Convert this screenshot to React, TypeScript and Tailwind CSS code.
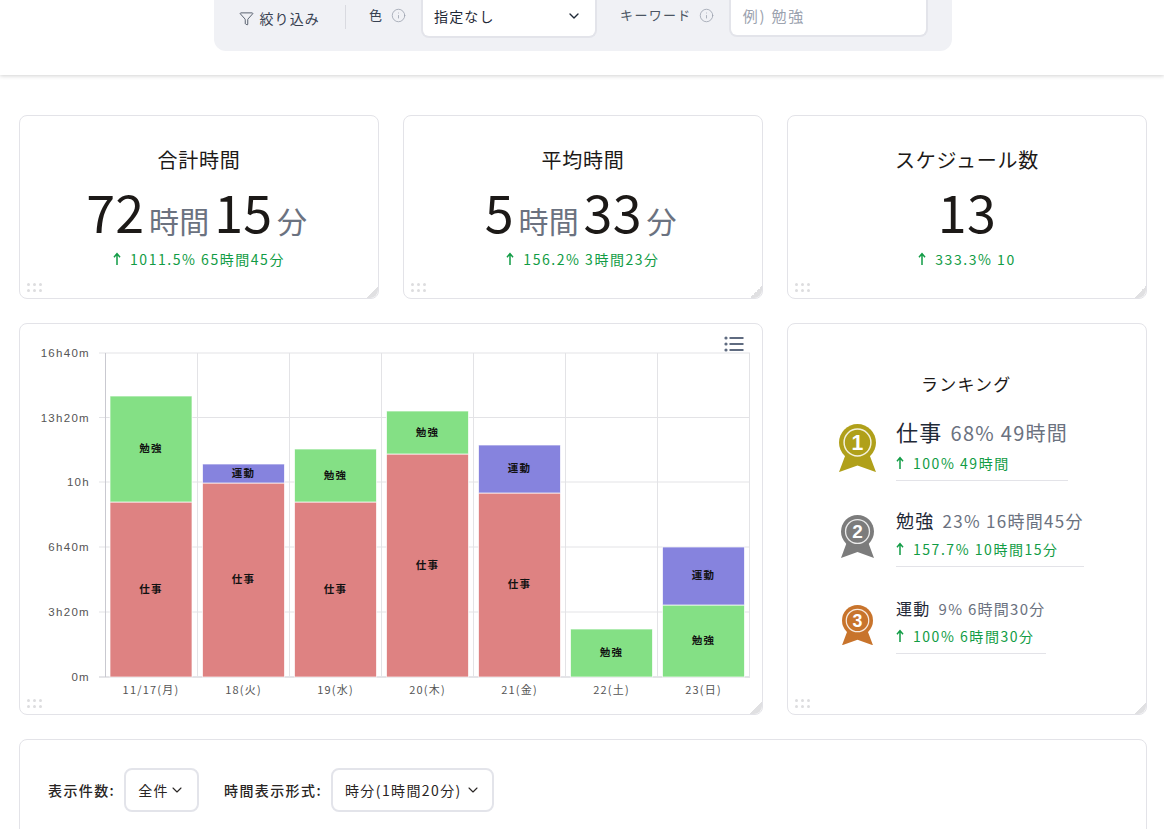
import { ChevronDown, Filter, Info } from 'lucide-react'

const font = { fontFamily: '"Noto Sans CJK JP", "Noto Sans", sans-serif' }

const GREEN = '#84e085'
const RED = '#de8282'
const BLUE = '#8683de'

const yTicks = [
  { y: 29, label: '16h40m' },
  { y: 93.5, label: '13h20m' },
  { y: 158, label: '10h' },
  { y: 223, label: '6h40m' },
  { y: 288, label: '3h20m' },
  { y: 353, label: '0m' },
]

const columns = [
  { x: 91, label: '11/17(月)', bars: [{ top: 178, bottom: 353, c: RED, t: '仕事' }, { top: 72, bottom: 178, c: GREEN, t: '勉強' }] },
  { x: 183.5, label: '18(火)', bars: [{ top: 159, bottom: 353, c: RED, t: '仕事' }, { top: 140, bottom: 159, c: BLUE, t: '運動' }] },
  { x: 275.5, label: '19(水)', bars: [{ top: 178, bottom: 353, c: RED, t: '仕事' }, { top: 125, bottom: 178, c: GREEN, t: '勉強' }] },
  { x: 367.5, label: '20(木)', bars: [{ top: 130, bottom: 353, c: RED, t: '仕事' }, { top: 87, bottom: 130, c: GREEN, t: '勉強' }] },
  { x: 459.5, label: '21(金)', bars: [{ top: 169, bottom: 353, c: RED, t: '仕事' }, { top: 121, bottom: 169, c: BLUE, t: '運動' }] },
  { x: 551.5, label: '22(土)', bars: [{ top: 305, bottom: 353, c: GREEN, t: '勉強' }] },
  { x: 643.5, label: '23(日)', bars: [{ top: 281, bottom: 353, c: GREEN, t: '勉強' }, { top: 223, bottom: 281, c: BLUE, t: '運動' }] },
]

function DragDots() {
  return (
    <div className="absolute bottom-[6px] left-[7px] grid grid-cols-3 gap-[3px]">
      {[0, 1, 2, 3, 4, 5].map(i => (
        <span key={i} className="h-[3px] w-[3px] rounded-full bg-[#dddddf]" />
      ))}
    </div>
  )
}

function ResizeCorner() {
  return (
    <div className="absolute bottom-0 right-0 h-3 w-3 rounded-br-lg bg-[linear-gradient(135deg,transparent_50%,#e0e0e2_50%)]" />
  )
}

function Card({ className = '', children }: { className?: string; children: React.ReactNode }) {
  return (
    <div className={`relative rounded-lg border border-[#e3e3e8] bg-white ${className}`}>
      {children}
      <DragDots />
      <ResizeCorner />
    </div>
  )
}

function UpArrow() {
  return (
    <svg width="8" height="14" viewBox="0 0 8 14" className="mr-[9px] shrink-0">
      <path d="M4 13V2M1 5.2 4 1.6l3 3.6" fill="none" stroke="currentColor" strokeWidth="1.5" />
    </svg>
  )
}

function Delta({ text, className = '' }: { text: string; className?: string }) {
  return (
    <div className={`flex items-center text-sm tracking-[0.11em] text-[#119c45] ${className}`}>
      <UpArrow />
      {text}
    </div>
  )
}

function StatCard({ title, parts, delta }: { title: string; parts: [string, string][]; delta: string }) {
  return (
    <Card className="flex h-[184px] flex-col items-center pt-[30px]">
      <div className="text-xl leading-[28px] tracking-[0.04em] text-[#1c1917]">{title}</div>
      <div className="mt-[12px] flex h-[50px] items-baseline leading-[50px] tracking-[0.02em]">
        {parts.map(([num, unit]) => (
          <span key={num} className="flex items-baseline">
            <span className="text-[52px] text-[#1c1917]">{num}</span>
            {unit && <span className="mx-[4.5px] text-[30px] text-[#6b7280]">{unit}</span>}
          </span>
        ))}
      </div>
      <Delta text={delta} className="mt-[13px]" />
    </Card>
  )
}

function Medal({ color, num, size }: { color: string; num: string; size: number }) {
  return (
    <svg width={size} height={size * 1.3} viewBox="0 0 40 52">
      <polygon points="9,28 0,52 20,45 40,52 31,28" fill={color} />
      <circle cx="20" cy="20" r="20" fill={color} />
      <circle cx="20" cy="20" r="14.5" fill="none" stroke="#fff" strokeWidth="1.6" opacity="0.85" />
      <text x="20" y="28" textAnchor="middle" fontSize="23" fontWeight="700" fill="#fff" fontFamily="Liberation Sans, sans-serif">
        {num}
      </text>
    </svg>
  )
}

function RankRow(props: {
  color: string
  num: string
  medal: number
  name: string
  nameSize: string
  rest: string
  restSize: string
  delta: string
  rowClass: string
}) {
  return (
    <div className={`flex items-center ${props.rowClass}`}>
      <div className="flex w-[37px] justify-center">
        <Medal color={props.color} num={props.num} size={props.medal} />
      </div>
      <div className="ml-[20px] border-b border-[#e3e3e8]">
        <div className="flex items-baseline gap-[8px] whitespace-nowrap tracking-[0.08em]">
          <span className={`${props.nameSize} text-[#1f2937]`}>{props.name}</span>
          <span className={`${props.restSize} text-[#6b7280]`}>{props.rest}</span>
        </div>
        <Delta text={props.delta} className="mt-[5px] pb-[7px]" />
      </div>
    </div>
  )
}

function Chart() {
  return (
    <svg viewBox="0 0 742 390" className="block h-[390px] w-[742px]">
      {yTicks.map(t => (
        <g key={t.label}>
          <line x1="79" x2="730" y1={t.y} y2={t.y} stroke={t.y === 353 ? '#c9c9d0' : '#e3e3e6'} />
          <text x="70" y={t.y + 4} textAnchor="end" fontSize="11.5" letterSpacing="1.3" fill="#555" fontFamily="Liberation Sans, sans-serif">
            {t.label}
          </text>
        </g>
      ))}
      {[177.5, 269.5, 361.5, 453.5, 545.5, 637.5, 729.5].map(x => (
        <line key={x} x1={x} x2={x} y1="29" y2="353" stroke="#e3e3e6" />
      ))}
      <line x1="85.5" x2="85.5" y1="29" y2="353" stroke="#c9c9d0" />
      {columns.map(col => (
        <g key={col.label}>
          {col.bars.map(b => (
            <g key={b.t}>
              <rect x={col.x - 1} width="82" y={b.top} height={b.bottom - b.top} fill={b.c} stroke="#fff" strokeOpacity="0.7" strokeWidth="1" />
              <text x={col.x + 40} y={(b.top + b.bottom) / 2 + 3} textAnchor="middle" fontSize="10.5" fontWeight="700" letterSpacing="1.2" fill="#111" style={font}>
                {b.t}
              </text>
            </g>
          ))}
          <text x={col.x + 40} y="370" textAnchor="middle" fontSize="11" letterSpacing="1.2" fill="#555" style={font}>
            {col.label}
          </text>
        </g>
      ))}
    </svg>
  )
}

function MenuIcon() {
  return (
    <svg width="20" height="16" viewBox="0 0 20 16" className="absolute right-[18px] top-[12px]">
      {[2, 8, 14].map(y => (
        <g key={y}>
          <circle cx="2" cy={y} r="1.6" fill="#5f6b80" />
          <rect x="5.5" y={y - 1} width="14" height="2" fill="#5f6b80" />
        </g>
      ))}
    </svg>
  )
}

export default function App() {
  return (
    <div className="h-[829px] overflow-hidden bg-white" style={font}>
      <header className="flex h-[75px] justify-center bg-white shadow-[0_1px_4px_rgba(0,0,0,0.18)]">
        <div className="-mt-[10px] ml-px flex h-[61px] w-[738px] items-start rounded-b-xl bg-[#f0f1f5] pl-[25px] text-sm tracking-[0.08em] text-[#374151]">
          <div className="mt-[18px] flex items-center gap-1">
            <Filter className="h-[15px] w-[15px]" strokeWidth={1.3} />
            <span className="ml-[2px]">絞り込み</span>
          </div>
          <div className="ml-[25px] mt-[15px] h-6 w-px bg-[#d9dae0]" />
          <div className="ml-[23px] mt-[16px] flex items-center gap-[8px] text-[13px]">
            色 <Info className="h-[15px] w-[15px] text-[#9ca3af]" strokeWidth={1.3} />
          </div>
          <div className="ml-[15px] -mt-px flex h-[49px] w-[176px] items-center justify-between rounded-lg border-2 border-t-0 border-[#e3e4ea] bg-white pl-[11px] pr-[13px] pt-[7px] text-[#1f2937]">
            指定なし
            <ChevronDown className="h-4 w-4" strokeWidth={2} />
          </div>
          <div className="ml-[23px] mt-[16px] flex items-center gap-[7px] text-[13px] tracking-[0.1em] text-[#4b5563]">
            キーワード <Info className="h-[15px] w-[15px] text-[#9ca3af]" strokeWidth={1.3} />
          </div>
          <div className="ml-[15px] -mt-px flex h-[48px] w-[199px] items-center rounded-lg border-2 border-t-0 border-[#e3e4ea] bg-white pl-[12px] pt-[7px] text-[15px] tracking-[0.12em] text-[#9ca3af]">
            例) 勉強
          </div>
        </div>
      </header>

      <main className="grid grid-cols-[360px_360px_360px] gap-6 pl-[19px] pt-10">
        <StatCard title="合計時間" parts={[['72', '時間'], ['15', '分']]} delta="1011.5% 65時間45分" />
        <StatCard title="平均時間" parts={[['5', '時間'], ['33', '分']]} delta="156.2% 3時間23分" />
        <StatCard title="スケジュール数" parts={[['13', '']]} delta="333.3% 10" />

        <Card className="col-span-2 h-[392px]">
          <MenuIcon />
          <Chart />
        </Card>

        <Card className="h-[392px] pl-[51px] pt-[49px]">
          <div className="ml-[82px] text-[17px] leading-[22px] tracking-[0.07em] text-[#1c1917]">ランキング</div>
          <RankRow color="#b0a01a" num="1" medal={37} name="仕事" nameSize="text-[22px]" rest="68% 49時間" restSize="text-[20px]" delta="100% 49時間" rowClass="mt-[20px]" />
          <RankRow color="#7c7c7c" num="2" medal={33} name="勉強" nameSize="text-lg" rest="23% 16時間45分" restSize="text-[17px]" delta="157.7% 10時間15分" rowClass="mt-[25px]" />
          <RankRow color="#c8742c" num="3" medal={31} name="運動" nameSize="text-base" rest="9% 6時間30分" restSize="text-[15px]" delta="100% 6時間30分" rowClass="mt-[29px]" />
        </Card>

        <div className="col-span-3 h-[200px] rounded-lg border border-[#e3e3e8] bg-white pl-[28px] pt-[28px]">
          <div className="flex items-center text-sm font-medium tracking-[0.1em] text-[#292524]">
            <span>表示件数:</span>
            <div className="ml-[9px] flex h-11 items-center rounded-lg border-2 border-[#e3e4ea] pl-[12px] pr-[12px] font-normal">
              全件 <ChevronDown className="h-4 w-4" strokeWidth={1.6} />
            </div>
            <span className="ml-[25px]">時間表示形式:</span>
            <div className="ml-[9px] flex h-11 items-center gap-[3px] rounded-lg border-2 border-[#e3e4ea] pl-[12px] pr-[11px] font-normal">
              時分(1時間20分) <ChevronDown className="h-4 w-4" strokeWidth={1.6} />
            </div>
          </div>
        </div>
      </main>
    </div>
  )
}
